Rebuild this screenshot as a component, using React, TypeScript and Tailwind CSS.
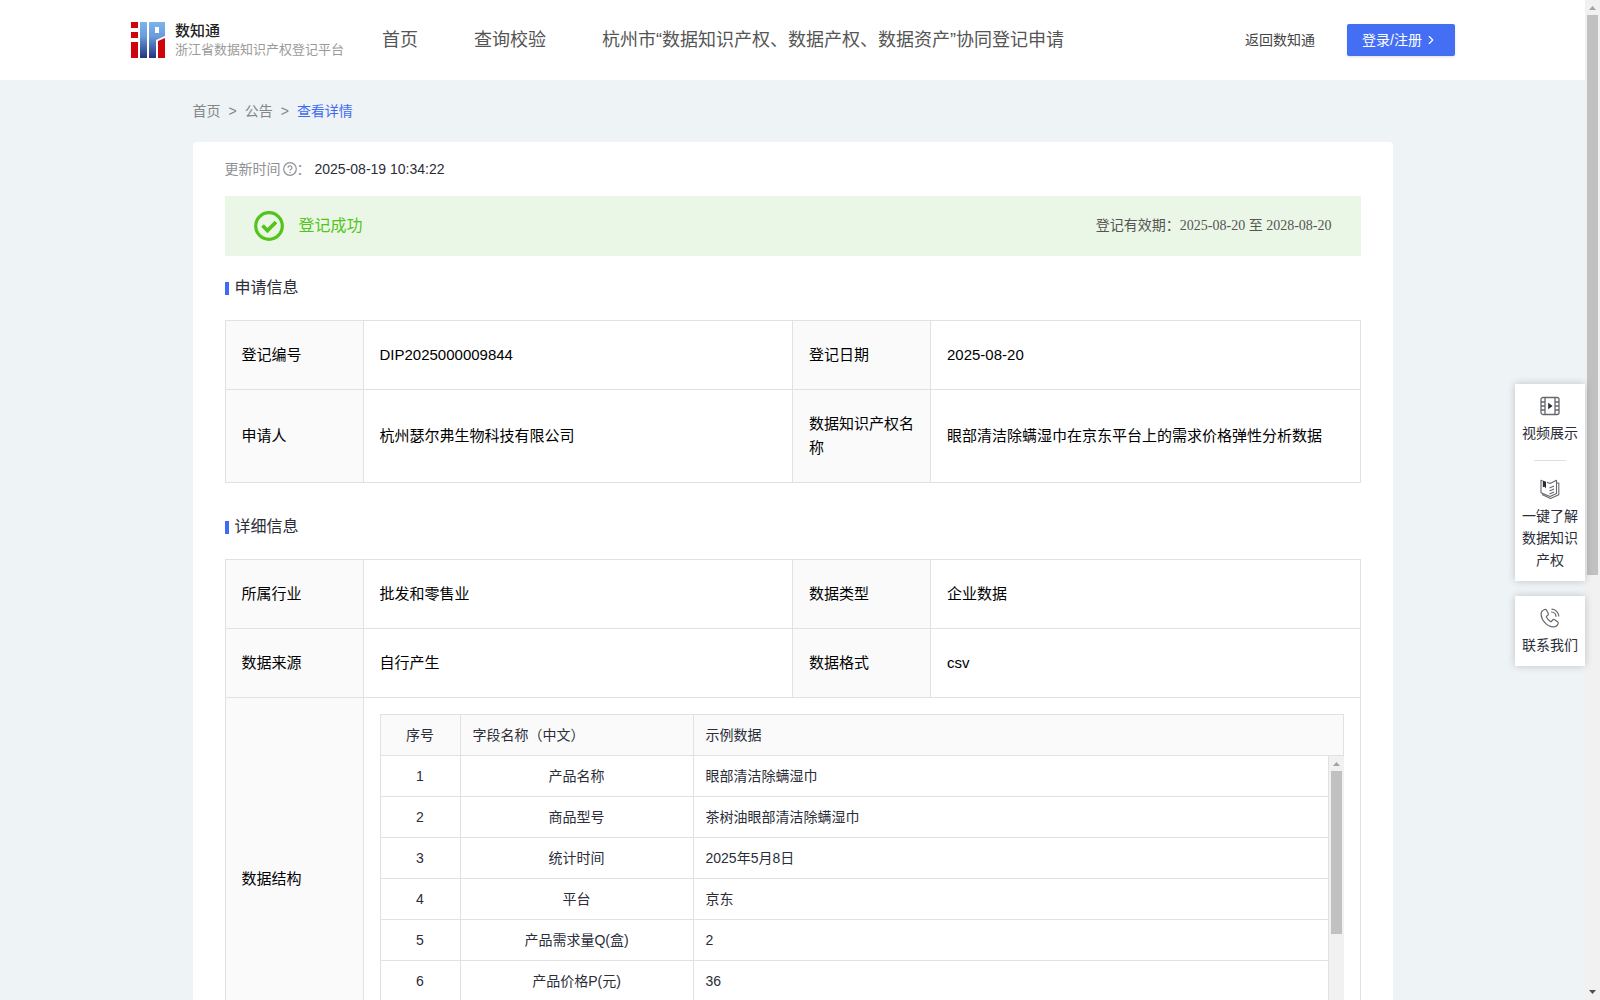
import React, { useState } from "react";
import { LuChevronRight } from "react-icons/lu";

interface InfoItem {
  label: string;
  value: string;
}

interface FieldRow {
  id: number;
  name: string;
  sample: string;
}

const navItems = ["首页", "查询校验", "杭州市“数据知识产权、数据产权、数据资产”协同登记申请"];

const applyInfo: InfoItem[][] = [
  [
    { label: "登记编号", value: "DIP2025000009844" },
    { label: "登记日期", value: "2025-08-20" },
  ],
  [
    { label: "申请人", value: "杭州瑟尔弗生物科技有限公司" },
    { label: "数据知识产权名称", value: "眼部清洁除螨湿巾在京东平台上的需求价格弹性分析数据" },
  ],
];

const detailInfo: InfoItem[][] = [
  [
    { label: "所属行业", value: "批发和零售业" },
    { label: "数据类型", value: "企业数据" },
  ],
  [
    { label: "数据来源", value: "自行产生" },
    { label: "数据格式", value: "csv" },
  ],
];

const fieldRows: FieldRow[] = [
  { id: 1, name: "产品名称", sample: "眼部清洁除螨湿巾" },
  { id: 2, name: "商品型号", sample: "茶树油眼部清洁除螨湿巾" },
  { id: 3, name: "统计时间", sample: "2025年5月8日" },
  { id: 4, name: "平台", sample: "京东" },
  { id: 5, name: "产品需求量Q(盒)", sample: "2" },
  { id: 6, name: "产品价格P(元)", sample: "36" },
];

const Logo: React.FC = () => (
  <svg viewBox="0 0 34 36" className="h-9 w-[34px]" aria-hidden="true">
    <defs>
      <linearGradient id="logoBlue" gradientUnits="userSpaceOnUse" x1="0" y1="0" x2="0" y2="36">
        <stop offset="0" stopColor="#7db4ec" />
        <stop offset="0.4" stopColor="#6a9bdb" />
        <stop offset="1" stopColor="#22347f" />
      </linearGradient>
    </defs>
    <path d="M0 0h7v6H0zM0 10h7v6H0zM0 20h7v16H0z" fill="#d0050c" />
    <path d="M9 0h7v36H9z" fill="url(#logoBlue)" />
    <path d="M18 0h16v14l-9 4v18h-7zM24 5v6h4V5z" fillRule="evenodd" fill="url(#logoBlue)" />
    <path d="M27 19l7-3v20h-7z" fill="#d0050c" />
  </svg>
);

const VideoIcon: React.FC = () => (
  <svg viewBox="0 0 20 20" className="size-5" fill="none" stroke="#66676c" strokeWidth="1.3" aria-hidden="true">
    <rect x="1" y="1.5" width="18" height="17" rx="2" />
    <path d="M5 1.5v17M15 1.5v17M1 6h4M1 10h4M1 14h4M15 6h4M15 10h4M15 14h4" />
    <path d="M8.2 6.8v6.4l4.4-3.2z" fill="#2b2d38" stroke="none" />
  </svg>
);

const BookIcon: React.FC = () => (
  <svg viewBox="0 0 20 20" className="size-5" fill="none" stroke="#66676c" strokeWidth="1.1" strokeLinejoin="round" aria-hidden="true">
    <path d="M7 3.2l3 1.3 6.500-3.300v13.300L10 17.500l-9-3.700V1.200l1.500.6M16.500 4h2.300v11.800L10.500 19.400 2 15.500" />
    <path d="M9.500 9l4.500-2M9.500 12l4.500-2M9.500 15l4.500-2" />
    <path d="M2.800 1.500L6 2.800v6.700L4.500 7.700 2.800 8.300z" fill="#2b2d38" stroke="none" />
  </svg>
);

const PhoneIcon: React.FC = () => (
  <svg viewBox="0 0 20 20" className="size-5" fill="none" stroke="#66676c" strokeWidth="1.2" strokeLinejoin="round" strokeLinecap="round" aria-hidden="true">
    <path d="M4.600 1.500C2.500 2.300 1 4 1.100 6.300c.3 6.200 6.200 12.600 12.200 12.600 2.200 0 4-1.300 4.800-3.200.3-.8.100-1.500-.5-1.900l-3-2c-.7-.5-1.600-.3-2.100.3l-.9 1.200c-.3.400-.8.400-1.200.2-1.700-1-3-2.500-3.900-4.200-.2-.4-.1-.9.3-1.200l1-.8c.6-.5.800-1.300.4-2L6.500 2.200c-.4-.7-1.100-1-1.900-.7z" />
    <path d="M12 1.200c3.600.3 6.500 3.200 6.800 6.800M11.500 4c2.500.2 4.300 2 4.500 4.300" />
  </svg>
);

const SectionTitle: React.FC<{ title: string }> = ({ title }) => (
  <h2 className="mb-5 flex items-center gap-1.5 text-base leading-6 text-[#2b2d38]">
    <span className="w-1 h-[13px] bg-[#3f6bf3]" />
    {title}
  </h2>
);

const ScrollArrow: React.FC<{ direction: "up" | "down" }> = ({ direction }) => (
  <svg viewBox="0 0 15 15" className="size-[15px] shrink-0" aria-hidden="true">
    {direction === "up" ? <path d="M4 10l3.500-4L11 10z" fill="#a3a3a3" /> : <path d="M4 5l3.500 4L11 5z" fill="#505050" />}
  </svg>
);

const InfoRows: React.FC<{ rows: InfoItem[][] }> = ({ rows }) => (
  <>
    {rows.map((row) => (
      <tr key={row[0].label}>
        {row.map((item) => (
          <React.Fragment key={item.label}>
            <th scope="row" className="border border-[#e1e1e1] bg-[#fafafa] px-4 py-[22px] text-left font-normal">
              {item.label}
            </th>
            <td className="border border-[#e1e1e1] px-4 py-[22px]">{item.value}</td>
          </React.Fragment>
        ))}
      </tr>
    ))}
  </>
);

const InfoTable: React.FC<{ rows: InfoItem[][]; children?: React.ReactNode }> = ({ rows, children }) => (
  <table className="w-full table-fixed border-collapse text-[15px] leading-6 text-black">
    <colgroup>
      <col className="w-[138px]" />
      <col />
      <col className="w-[138px]" />
      <col />
    </colgroup>
    <tbody>
      <InfoRows rows={rows} />
      {children}
    </tbody>
  </table>
);

const FieldCols: React.FC = () => (
  <colgroup>
    <col className="w-20" />
    <col className="w-[233px]" />
    <col />
  </colgroup>
);

const FieldTable: React.FC = () => (
  <div className="border-l border-t border-[#e1e1e1] text-sm leading-[22px] text-[#2b2d38]">
    <table className="w-full table-fixed border-separate border-spacing-0">
      <FieldCols />
      <thead>
        <tr className="h-[41px] bg-[#fafafa]">
          <th className="border-r border-b border-[#e1e1e1] px-3 font-normal">序号</th>
          <th className="border-r border-b border-[#e1e1e1] px-3 text-left font-normal">字段名称（中文）</th>
          <th className="border-r border-b border-[#e1e1e1] px-3 text-left font-normal">示例数据</th>
        </tr>
      </thead>
    </table>
    <div className="flex h-[287px]">
      <div className="flex-1 overflow-hidden">
        <table className="w-full table-fixed border-separate border-spacing-0">
          <FieldCols />
          <tbody>
            {fieldRows.map((row) => (
              <tr key={row.id} className="h-[41px]">
                <td className="border-r border-b border-[#e1e1e1] px-3 text-center">{row.id}</td>
                <td className="border-r border-b border-[#e1e1e1] px-3 text-center">{row.name}</td>
                <td className="border-r border-b border-[#e1e1e1] px-3">{row.sample}</td>
              </tr>
            ))}
          </tbody>
        </table>
      </div>
      <div className="flex w-[15px] flex-col items-center bg-[#f1f1f1]" aria-hidden="true">
        <ScrollArrow direction="up" />
        <div className="h-[163px] w-[11px] bg-[#c1c1c1]" />
      </div>
    </div>
  </div>
);

const App: React.FC = () => {
  const [activeNav, setActiveNav] = useState("");

  return (
    <div className="flex h-screen bg-[#eef3f6] font-['Liberation_Sans','Noto_Sans_CJK_SC',sans-serif]">
      <div className="relative min-w-0 flex-1">
        <div className="h-full overflow-y-auto [scrollbar-width:none]">
          <header className="flex h-20 items-center bg-white pr-[130px] pl-[131px]">
            <a href="#" className="flex items-center gap-2.5">
              <Logo />
              <span className="flex flex-col">
                <span className="text-[15px] leading-5 font-medium text-[#222222]">数知通</span>
                <span className="text-[13px] leading-[18px] text-[#9b9b9b]">浙江省数据知识产权登记平台</span>
              </span>
            </a>
            <nav className="ml-[38px] flex gap-14 text-lg leading-6 text-[#555555]">
              {navItems.map((item) => (
                <a
                  key={item}
                  href="#"
                  onClick={() => setActiveNav(item)}
                  className={activeNav === item ? "whitespace-nowrap text-[#3f6bf3]" : "whitespace-nowrap"}
                >
                  {item}
                </a>
              ))}
            </nav>
            <a href="#" className="ml-auto text-sm text-[#444444]">返回数知通</a>
            <button
              type="button"
              className="ml-8 flex h-8 w-[108px] items-center gap-0.5 rounded-xs bg-[#446ff5] pl-[15px] text-sm text-white shadow-sm"
            >
              登录/注册
              <LuChevronRight className="size-3.5" />
            </button>
          </header>

          <main className="mx-auto w-full max-w-[1200px]">
            <nav className="flex gap-2 py-5 text-sm leading-[22px] text-[#858585]">
              <a href="#">首页</a>
              <span>&gt;</span>
              <a href="#">公告</a>
              <span>&gt;</span>
              <a href="#" className="text-[#3f6bf3]">查看详情</a>
            </nav>

            <div className="rounded bg-white px-8 pt-4 pb-8">
              <div className="flex items-center text-sm leading-[22px] text-[#8f9095]">
                更新时间
                <svg viewBox="0 0 14 14" className="ml-0.5 size-3.5" fill="none" stroke="#8f9095" strokeWidth="1.200" aria-hidden="true">
                  <circle cx="7" cy="7" r="6.300" />
                  <path d="M5 5.700a2 1.900 0 1 1 3 1.600c-.7.4-1 .7-1 1.300M7 9.700v1.200" />
                </svg>
                ：
                <span className="ml-1 text-[#2b2d38]">2025-08-19 10:34:22</span>
              </div>

              <div className="mt-4 flex h-[60px] items-center bg-[#ebf7e6] px-[29px]">
                <svg viewBox="0 0 30 30" className="size-[30px]" fill="none" stroke="#52c41a" aria-hidden="true">
                  <circle cx="15" cy="15" r="13.300" strokeWidth="3.200" />
                  <path d="M8.500 14.500l5 5 8.500-8.500" strokeWidth="3.800" />
                </svg>
                <span className="ml-[15px] text-base text-[#52c41a]">登记成功</span>
                <span className="ml-auto font-['Liberation_Serif','Noto_Sans_CJK_SC',serif] text-sm text-[#555555]">
                  登记有效期：2025-08-20 至 2028-08-20
                </span>
              </div>

              <section className="mt-5">
                <SectionTitle title="申请信息" />
                <InfoTable rows={applyInfo} />
              </section>

              <section className="mt-8">
                <SectionTitle title="详细信息" />
                <InfoTable rows={detailInfo}>
                  <tr>
                    <th scope="row" className="border border-[#e1e1e1] bg-[#fafafa] px-4 text-left font-normal">数据结构</th>
                    <td colSpan={3} className="border border-[#e1e1e1] p-4">
                      <FieldTable />
                    </td>
                  </tr>
                </InfoTable>
              </section>
            </div>
          </main>
        </div>

        <aside className="absolute top-96 right-0 flex w-[70px] flex-col gap-[15px] text-center text-sm leading-[22px] text-[#2b2d38]">
          <div className="flex flex-col items-center bg-white px-[7px] pt-3 pb-2.5 shadow-[0_0_8px_rgba(0,0,0,0.2)]">
            <a href="#" className="flex flex-col items-center gap-1.5">
              <VideoIcon />
              视频展示
            </a>
            <span className="mt-4 mb-[18px] h-px w-8 bg-[#dedede]" />
            <a href="#" className="flex flex-col items-center gap-1.5">
              <BookIcon />
              一键了解数据知识产权
            </a>
          </div>
          <div className="bg-white px-[7px] pt-3 pb-2.5 shadow-[0_0_8px_rgba(0,0,0,0.2)]">
            <a href="#" className="flex flex-col items-center gap-1.5">
              <PhoneIcon />
              联系我们
            </a>
          </div>
        </aside>
      </div>

      <div className="flex w-[15px] flex-col items-center bg-[#f1f1f1]" aria-hidden="true">
        <ScrollArrow direction="up" />
        <div className="h-[560px] w-[11px] bg-[#c1c1c1]" />
        <span className="flex-1" />
        <ScrollArrow direction="down" />
      </div>
    </div>
  );
};

export default App;
